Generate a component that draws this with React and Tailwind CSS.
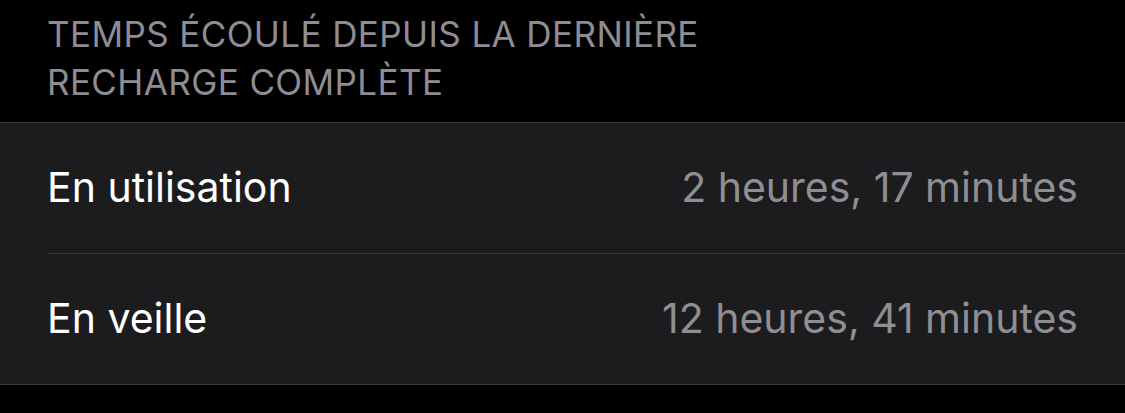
export default function App() {
  const rows = [
    { label: 'En utilisation', value: '2 heures, 17 minutes' },
    { label: 'En veille', value: '12 heures, 41 minutes' },
  ]

  return (
    <div className="w-[1125px] h-[413px] bg-black overflow-hidden" style={{ fontFamily: 'Inter, "Noto Sans", sans-serif' }}>
      <div className="pl-[47px] pr-[47px] pt-[10px] h-[122px] text-[35px] leading-[48px] tracking-[0.4px] text-[#8d8d93] uppercase">
        Temps écoulé depuis la dernière
        <br />
        recharge complète
      </div>
      <div className="bg-[#1c1c1e] border-y border-[#38383a]">
        {rows.map((row, i) => (
          <div key={row.label} className="pl-[47px]">
            <div
              className={`flex items-center justify-between pr-[47px] ${
                i < rows.length - 1 ? 'border-b border-[#38383a] h-[131px]' : 'h-[130px]'
              }`}
            >
              <span className="text-[41px] text-white">{row.label}</span>
              <span className="text-[41px] text-[#8e8e93]">{row.value}</span>
            </div>
          </div>
        ))}
      </div>
    </div>
  )
}
